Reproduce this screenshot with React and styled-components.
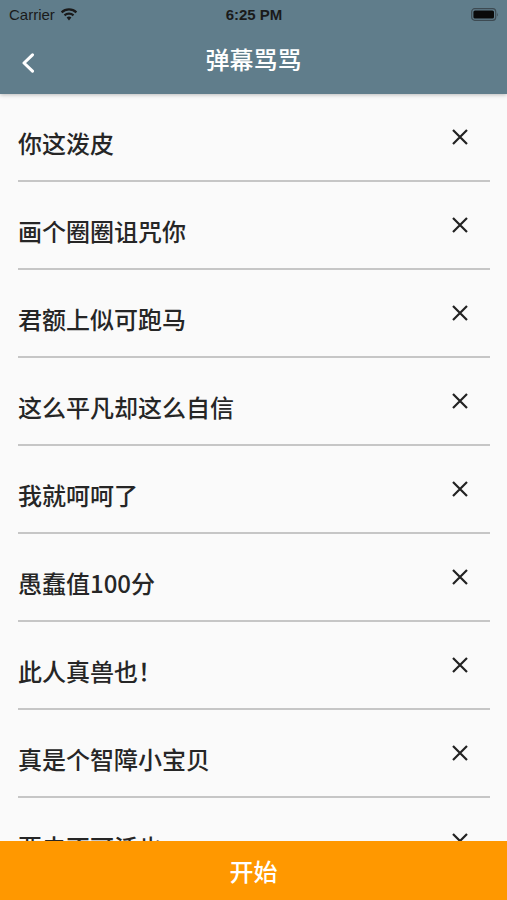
import React from "react";
import styled, { createGlobalStyle } from "styled-components";

const GlobalStyle = createGlobalStyle`
  html, body { margin: 0; padding: 0; background: #fafafa; }
  body { font-family: "Noto Sans CJK SC", "Noto Sans", sans-serif; }
  * { box-sizing: border-box; }
`;

const Screen = styled.div`
  width: 507px;
  height: 900px;
  display: flex;
  flex-direction: column;
  background: #fafafa;
  overflow: hidden;
`;

const Header = styled.header`
  background: #607d8b;
  height: 94px;
  flex: none;
  display: flex;
  flex-direction: column;
  box-shadow: 0 1px 4px rgba(0, 0, 0, 0.25);
  position: relative;
  z-index: 2;
`;

const StatusBar = styled.div`
  height: 28px;
  display: grid;
  grid-template-columns: 1fr auto 1fr;
  align-items: center;
  padding: 0 8px 0 9px;
  color: #1a1a1a;
  font-family: "Liberation Sans", "Noto Sans", sans-serif;
  font-size: 15px;
`;

const Carrier = styled.div`
  display: flex;
  align-items: center;
  gap: 5px;
`;

const Time = styled.div`
  font-weight: 700;
  font-size: 15px;
`;

const Right = styled.div`
  display: flex;
  justify-content: flex-end;
  align-items: center;
`;

const NavBar = styled.div`
  flex: 1;
  display: grid;
  grid-template-columns: 1fr auto 1fr;
  align-items: center;
  padding: 0 21px 6px 21px;
`;

const BackButton = styled.button`
  background: none;
  border: 0;
  padding: 0;
  display: flex;
  align-items: center;
  margin-top: 10px;
  cursor: pointer;
  justify-self: start;
`;

const Title = styled.h1`
  margin: 0;
  color: #ffffff;
  font-size: 24px;
  font-weight: 500;
  letter-spacing: 0;
`;

const List = styled.ul`
  list-style: none;
  margin: 0;
  padding: 0;
  flex: 1;
  overflow: hidden;
`;

const Row = styled.li`
  height: 88px;
  margin: 0 17px 0 18px;
  border-bottom: 2px solid #c6c6c6;
  display: flex;
  align-items: center;
  justify-content: space-between;
`;

const RowText = styled.span`
  font-size: 24px;
  font-weight: 500;
  color: #262626;
  padding-top: 10px;
`;

const DeleteButton = styled.button`
  background: none;
  border: 0;
  padding: 0;
  margin-right: 21px;
  display: flex;
  cursor: pointer;
`;

const StartButton = styled.button`
  flex: none;
  height: 59px;
  width: 100%;
  border: 0;
  background: #ff9800;
  color: #ffffff;
  font-family: "Noto Sans CJK SC", sans-serif;
  font-size: 24px;
  font-weight: 500;
  display: flex;
  align-items: center;
  justify-content: center;
  cursor: pointer;
`;

const WifiIcon = () => (
  <svg width="18" height="13" viewBox="0 0 18 13">
    <path d="M9 12.5 L6.6 9.6 A3.6 3.6 0 0 1 11.4 9.6 Z" fill="#1a1a1a" />
    <path d="M4.5 7.4 A6.6 6.6 0 0 1 13.5 7.4" stroke="#1a1a1a" strokeWidth="2.2" fill="none" />
    <path d="M1.6 4.4 A10.6 10.6 0 0 1 16.4 4.4" stroke="#1a1a1a" strokeWidth="2.2" fill="none" />
  </svg>
);

const BatteryIcon = () => (
  <svg width="28" height="13" viewBox="0 0 28 13">
    <rect x="0.7" y="0.7" width="24" height="11.6" rx="3" fill="none" stroke="#3d4a52" strokeWidth="1.2" />
    <rect x="2.4" y="2.4" width="20.6" height="8.2" rx="1.6" fill="#0a0a0a" />
    <path d="M26 4.5 Q27.4 6.5 26 8.5 Z" fill="#3d4a52" />
  </svg>
);

const ChevronLeft = () => (
  <svg width="14" height="20" viewBox="0 0 14 20">
    <path d="M11.5 1.8 L3 10 L11.5 18.2" stroke="#ffffff" strokeWidth="3" fill="none" strokeLinecap="round" strokeLinejoin="round" />
  </svg>
);

const CloseIcon = () => (
  <svg width="18" height="18" viewBox="0 0 18 18">
    <path d="M2 2 L16 16 M16 2 L2 16" stroke="#222222" strokeWidth="2.2" strokeLinecap="butt" />
  </svg>
);

const items = [
  "你这泼皮",
  "画个圈圈诅咒你",
  "君额上似可跑马",
  "这么平凡却这么自信",
  "我就呵呵了",
  "愚蠢值100分",
  "此人真兽也！",
  "真是个智障小宝贝",
  "要去不可活也",
];

export default function App() {
  return (
    <>
      <GlobalStyle />
      <Screen>
        <Header>
          <StatusBar>
            <Carrier>
              Carrier
              <WifiIcon />
            </Carrier>
            <Time>6:25 PM</Time>
            <Right>
              <BatteryIcon />
            </Right>
          </StatusBar>
          <NavBar>
            <BackButton aria-label="back">
              <ChevronLeft />
            </BackButton>
            <Title>弹幕骂骂</Title>
            <span />
          </NavBar>
        </Header>
        <List>
          {items.map((t) => (
            <Row key={t}>
              <RowText>{t}</RowText>
              <DeleteButton aria-label="delete">
                <CloseIcon />
              </DeleteButton>
            </Row>
          ))}
        </List>
        <StartButton>开始</StartButton>
      </Screen>
    </>
  );
}
